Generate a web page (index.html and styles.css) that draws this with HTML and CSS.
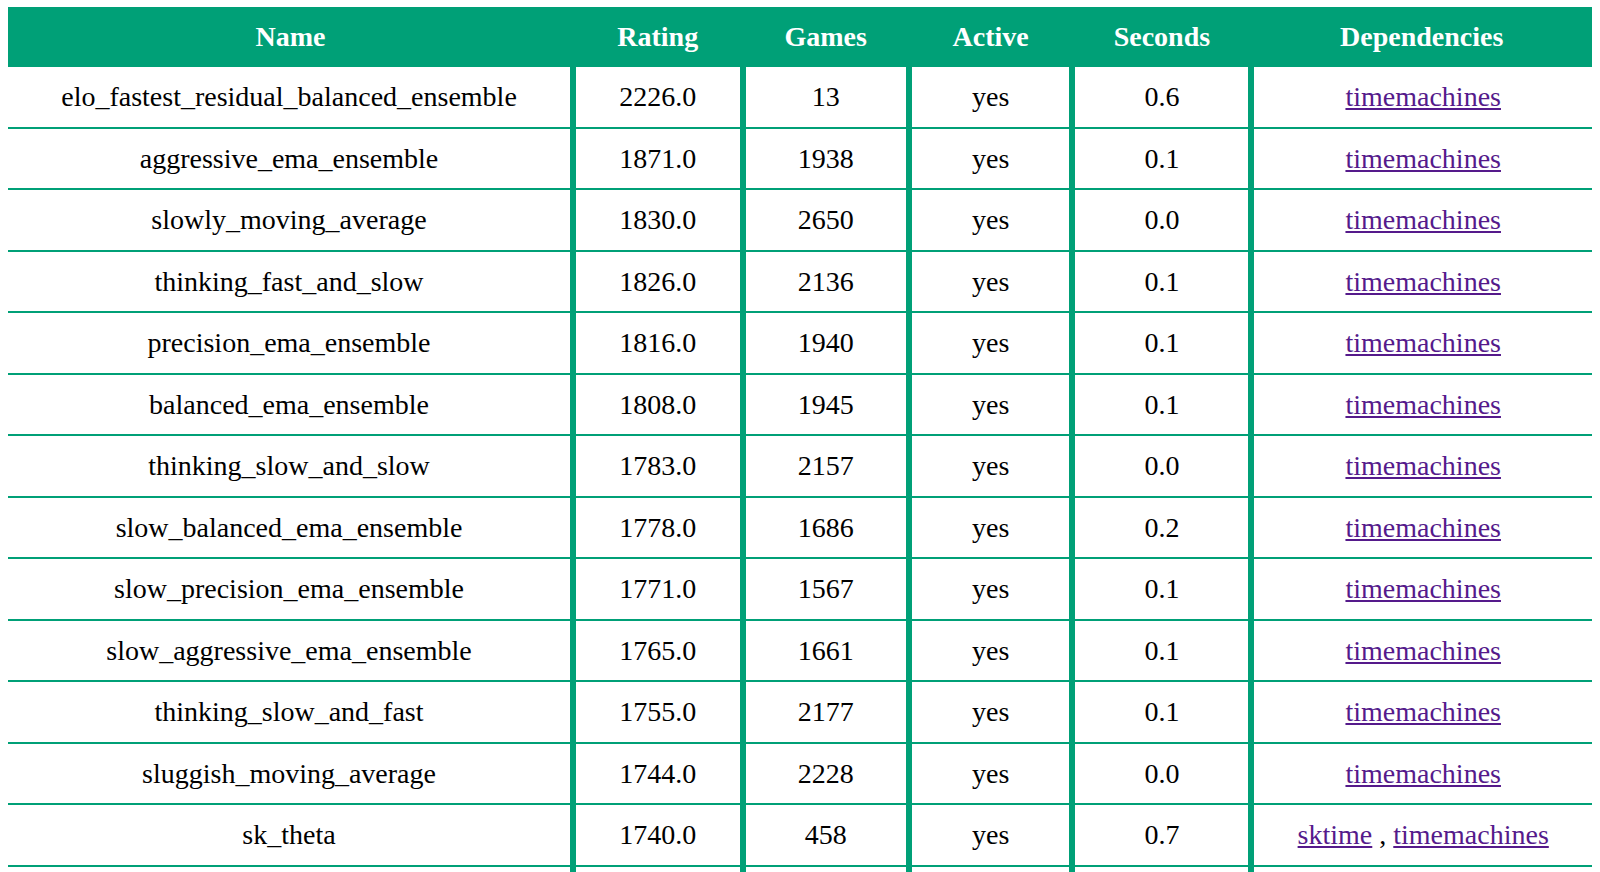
FILE: index.html
```html
<!DOCTYPE html>
<html>
<head>
<meta charset="utf-8">
<title>Leaderboard</title>
<link rel="stylesheet" href="styles.css">
</head>
<body>
<table class="board">
  <thead>
    <tr>
      <th class="c-name">Name</th>
      <th class="c-rating">Rating</th>
      <th class="c-games">Games</th>
      <th class="c-active">Active</th>
      <th class="c-seconds">Seconds</th>
      <th class="c-deps">Dependencies</th>
    </tr>
  </thead>
  <tbody>
    <tr><td>elo_fastest_residual_balanced_ensemble</td><td>2226.0</td><td>13</td><td>yes</td><td>0.6</td><td><a href="#">timemachines</a></td></tr>
    <tr><td>aggressive_ema_ensemble</td><td>1871.0</td><td>1938</td><td>yes</td><td>0.1</td><td><a href="#">timemachines</a></td></tr>
    <tr><td>slowly_moving_average</td><td>1830.0</td><td>2650</td><td>yes</td><td>0.0</td><td><a href="#">timemachines</a></td></tr>
    <tr><td>thinking_fast_and_slow</td><td>1826.0</td><td>2136</td><td>yes</td><td>0.1</td><td><a href="#">timemachines</a></td></tr>
    <tr><td>precision_ema_ensemble</td><td>1816.0</td><td>1940</td><td>yes</td><td>0.1</td><td><a href="#">timemachines</a></td></tr>
    <tr><td>balanced_ema_ensemble</td><td>1808.0</td><td>1945</td><td>yes</td><td>0.1</td><td><a href="#">timemachines</a></td></tr>
    <tr><td>thinking_slow_and_slow</td><td>1783.0</td><td>2157</td><td>yes</td><td>0.0</td><td><a href="#">timemachines</a></td></tr>
    <tr><td>slow_balanced_ema_ensemble</td><td>1778.0</td><td>1686</td><td>yes</td><td>0.2</td><td><a href="#">timemachines</a></td></tr>
    <tr><td>slow_precision_ema_ensemble</td><td>1771.0</td><td>1567</td><td>yes</td><td>0.1</td><td><a href="#">timemachines</a></td></tr>
    <tr><td>slow_aggressive_ema_ensemble</td><td>1765.0</td><td>1661</td><td>yes</td><td>0.1</td><td><a href="#">timemachines</a></td></tr>
    <tr><td>thinking_slow_and_fast</td><td>1755.0</td><td>2177</td><td>yes</td><td>0.1</td><td><a href="#">timemachines</a></td></tr>
    <tr><td>sluggish_moving_average</td><td>1744.0</td><td>2228</td><td>yes</td><td>0.0</td><td><a href="#">timemachines</a></td></tr>
    <tr><td>sk_theta</td><td>1740.0</td><td>458</td><td>yes</td><td>0.7</td><td><a href="#">sktime</a> , <a href="#">timemachines</a></td></tr>
    <tr><td>&nbsp;</td><td>&nbsp;</td><td>&nbsp;</td><td>&nbsp;</td><td>&nbsp;</td><td>&nbsp;</td></tr>
  </tbody>
</table>
</body>
</html>
```

FILE: styles.css
```css
html, body {
  background: #ffffff;
}
body {
  margin: 7px 8px 8px;
  font-family: "Liberation Serif", "Times New Roman", serif;
  color: #000000;
}
.board {
  width: 100%;
  border-collapse: collapse;
  table-layout: fixed;
  font-size: 28px;
}
.board thead tr {
  background: #00a077;
  color: #ffffff;
}
.board th {
  font-weight: bold;
  line-height: 32px;
  padding: 14px 0;
  text-align: center;
}
.c-name { width: 35.67%; }
.c-rating { width: 10.70%; }
.c-games { width: 10.51%; }
.c-active { width: 10.32%; }
.c-seconds { width: 11.30%; }
.c-deps { width: 21.50%; }
.board td {
  line-height: 31.5px;
  padding: 14px 0;
  text-align: center;
  border-bottom: 2px solid #00a077;
  white-space: nowrap;
}
.board td + td {
  border-left: 6px solid #00a077;
}
.board a {
  color: #551a8b;
  text-decoration: underline;
}
```
